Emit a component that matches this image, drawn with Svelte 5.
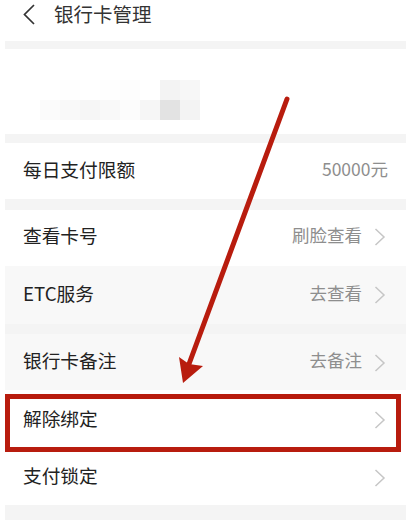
<script>
  const mosaic = [
    ['#fff', '#fefefe', '#fff', '#fefefe', '#fdfdfd', '#fff', '#f3f3f3', '#f7f7f7'],
    ['#fbfbfb', '#f9f9f9', '#f6f6f6', '#f9f9f9', '#fcfcfc', '#f6f6f6', '#e3e3e3', '#f3f3f3']
  ];
</script>

<div class="page">
  <header class="top">
    <svg class="back" width="14" height="22" viewBox="0 0 14 22">
      <path d="M12 2 L2.5 11.5 L12 21" fill="none" stroke="#333" stroke-width="1.7" />
    </svg>
    <span class="title">银行卡管理</span>
  </header>

  <div class="body">
    <div class="band first"></div>
    <div class="card">
      <div class="mosaic">
        {#each mosaic as row}
          {#each row as c}
            <i style="background: {c}"></i>
          {/each}
        {/each}
      </div>
    </div>
    <div class="band mid"></div>

    <div class="row limit">
      <span class="name">每日支付限额</span>
      <span class="val num">50000元</span>
    </div>
    <div class="band big"></div>

    <div class="row look">
      <span class="name">查看卡号</span>
      <span class="val">刷脸查看</span>
      <svg class="chev" width="12" height="18" viewBox="0 0 12 18"><path d="M1.5 1 L10 9 L1.5 17" /></svg>
    </div>
    <div class="row etc grey">
      <span class="name">ETC服务</span>
      <span class="val">去查看</span>
      <svg class="chev" width="12" height="18" viewBox="0 0 12 18"><path d="M1.5 1 L10 9 L1.5 17" /></svg>
    </div>
    <div class="gap"></div>
    <div class="row note grey">
      <span class="name">银行卡备注</span>
      <span class="val">去备注</span>
      <svg class="chev" width="12" height="18" viewBox="0 0 12 18"><path d="M1.5 1 L10 9 L1.5 17" /></svg>
    </div>
    <div class="row unbind">
      <span class="name">解除绑定</span>
      <svg class="chev" width="12" height="18" viewBox="0 0 12 18"><path d="M1.5 1 L10 9 L1.5 17" /></svg>
    </div>
    <div class="row lock">
      <span class="name">支付锁定</span>
      <svg class="chev" width="12" height="18" viewBox="0 0 12 18"><path d="M1.5 1 L10 9 L1.5 17" /></svg>
    </div>
    <div class="band end"></div>
  </div>

  <!-- annotation drawn over the screenshot -->
  <div class="redbox"></div>
  <svg class="arrow" width="406" height="520" viewBox="0 0 406 520">
    <path d="M287 99 L189 364" stroke="#b81c0e" stroke-width="5" stroke-linecap="round" fill="none" />
    <path d="M183 383 L179 357 L189 364 L203 366 Z" fill="#b81c0e" />
  </svg>
</div>

<style>
  :global(body) {
    margin: 0;
    background: #fff;
  }

  .page {
    position: relative;
    width: 406px;
    height: 520px;
    overflow: hidden;
    background: #fff;
    font-family: "Noto Sans CJK SC", "Noto Sans", sans-serif;
    color: #222;
  }

  .top {
    display: flex;
    align-items: center;
    height: 41px;
    padding: 0 0 13px 22px;
    box-sizing: border-box;
    gap: 18px;
  }

  .title {
    font-size: 19.5px;
    color: #333;
    line-height: 28px;
  }

  .back {
    margin-top: -1px;
  }

  .body {
    margin-left: 5px;
  }

  .band {
    background: #f4f4f4;
  }

  .first {
    height: 8px;
  }

  .mid {
    height: 9px;
  }

  .big {
    height: 11px;
  }

  .end {
    height: 15px;
  }

  .card {
    height: 85px;
    padding: 31px 0 0 35px;
    box-sizing: border-box;
  }

  .mosaic {
    display: grid;
    grid-template-columns: repeat(8, 20px);
    grid-auto-rows: 20px;
    width: 160px;
  }

  .row {
    display: flex;
    align-items: center;
    box-sizing: border-box;
    padding: 0 20px 4px 18px;
    background: #fff;
  }

  .grey {
    background: #f8f8f8;
  }

  .limit {
    height: 56px;
  }

  .look {
    height: 56px;
    padding-bottom: 6px;
  }

  .etc {
    height: 58px;
  }

  .gap {
    height: 10px;
    background: #f4f4f4;
  }

  .note {
    height: 56px;
  }

  .unbind {
    height: 62px;
    padding-bottom: 6px;
  }

  .lock {
    height: 53px;
    padding-bottom: 8px;
  }

  .name {
    flex: 1;
    font-size: 18.7px;
    color: #222;
    line-height: 24px;
  }

  .val {
    font-size: 17.5px;
    color: #8e8e8e;
    line-height: 24px;
    margin-right: 12px;
  }

  .num {
    margin-right: -2px;
  }

  .chev {
    flex: none;
    margin-top: 4px;
  }

  .note .chev,
  .lock .chev {
    margin-top: 6px;
  }

  .chev path {
    fill: none;
    stroke: #c6c6c6;
    stroke-width: 1.5;
  }

  .redbox {
    position: absolute;
    left: 5px;
    top: 394px;
    width: 396px;
    height: 58px;
    box-sizing: border-box;
    border: 5px solid #b81c0e;
  }

  .arrow {
    position: absolute;
    left: 0;
    top: 0;
  }
</style>
